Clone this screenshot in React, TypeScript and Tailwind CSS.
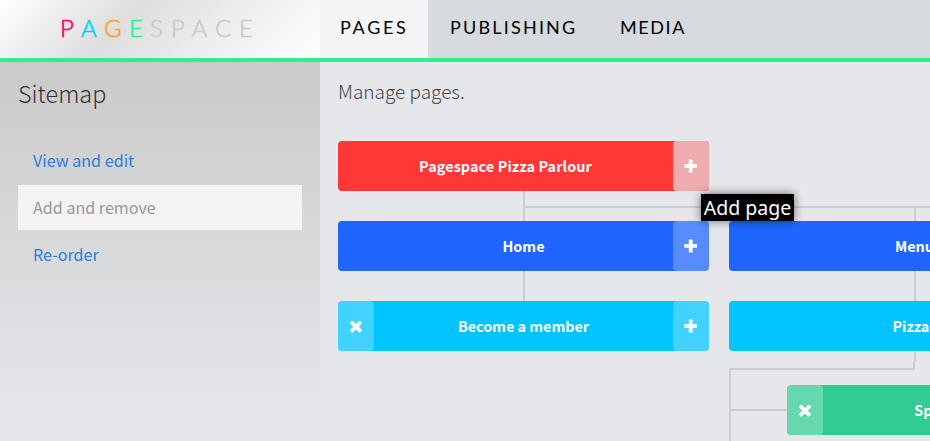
import type { ReactNode } from "react";

const sans = "font-['Noto_Sans_CJK_SC',sans-serif]";

function Plus() {
  return (
    <svg width="14" height="14" viewBox="0 0 14 14" fill="#fff">
      <path d="M4.8.5h3.8v4.5H13v3.8H8.6v4.7H4.8V8.8H.3V5h4.5z" />
    </svg>
  );
}

function Times() {
  return (
    <svg width="18" height="18" viewBox="0 0 1792 1792" fill="#fff">
      <path d="M1490 1322q0 40-28 68l-136 136q-28 28-68 28t-68-28l-294-294-294 294q-28 28-68 28t-68-28l-136-136q-28-28-28-68t28-68l294-294-294-294q-28-28-28-68t28-68l136-136q28-28 68-28t68 28l294 294 294-294q28-28 68-28t68 28l136 136q28 28 28 68t-28 68l-294 294 294 294q28 28 28 68z" />
    </svg>
  );
}

function Action({ tint = "bg-white/25", children }: { tint?: string; children: ReactNode }) {
  return <button className={`flex h-[50px] w-9 shrink-0 items-center justify-center rounded ${tint}`}>{children}</button>;
}

function PageNode({ color, label, remove = false, root = false }: { color: string; label: string; remove?: boolean; root?: boolean }) {
  return (
    <div className={`flex h-[50px] w-[371px] shrink-0 items-center rounded ${color}`}>
      {!root && <div className="w-9 shrink-0">{remove && <Action><Times /></Action>}</div>}
      <div className={`grow text-center text-[14.35px] leading-[50px] font-bold text-white ${root ? "tracking-[0.12px]" : ""}`}>{label}</div>
      <Action tint={root ? "bg-[#eeacae]" : undefined}><Plus /></Action>
    </div>
  );
}

const nav = "flex h-[55px] items-center text-[18px] text-black";

export default function App() {
  return (
    <div className={`h-[441px] w-[930px] overflow-hidden bg-[#e5e7eb] ${sans}`}>
      <header className="flex h-[62px] border-b-4 border-[#2af190] bg-[#d7dadf] font-[Lato,sans-serif]">
        <div className="flex h-[58px] w-80 bg-[linear-gradient(135deg,#fff_0%,#dedede_38%,#fff_100%)] pl-[60px] text-[24px] leading-[56px] font-light text-[#cbcbcb] [-webkit-text-stroke:0.6px_currentColor]">
          <span className="w-[21px] text-[#ff0058]">P</span>
          <span className="w-[23px] text-[#00d2ff]">A</span>
          <span className="w-[25px] text-[#ffa02a]">G</span>
          <span className="w-[21px] text-[#2af190]">E</span>
          <span className="tracking-[8px]">SPACE</span>
        </div>
        <nav className="flex">
          <div className="h-[58px] w-[108px] bg-[#f5f5f5] pl-5">
            <a className={`${nav} tracking-[2.7px]`}>PAGES</a>
          </div>
          <a className={`${nav} w-[170px] pl-[22px] tracking-[2.2px]`}>PUBLISHING</a>
          <a className={`${nav} pl-[22px] tracking-[1.6px]`}>MEDIA</a>
        </nav>
      </header>
      <div className="flex h-[379px]">
        <aside className="w-80 shrink-0 bg-linear-to-b from-[#cacaca] to-[#e5e7eb] to-95% px-[18px]">
          <h1 className="pt-[13px] text-[23.45px] leading-9 font-light text-[#333]">Sitemap</h1>
          <ul className="mt-[27px] flex flex-col gap-[2px] text-[16.13px] text-[#2a80e0]">
            <li className="h-[45px] px-[15px] leading-[44px]">View and edit</li>
            <li className="h-[45px] bg-[#f3f3f3] px-[15px] leading-[44px] text-[#999]">Add and remove</li>
            <li className="h-[45px] px-[15px] leading-[44px]">Re-order</li>
          </ul>
        </aside>
        <main className="w-[610px] overflow-hidden pl-[18px]">
          <p className="h-[79px] pt-[14px] text-[19px] leading-[30px] font-light text-[#444]">Manage pages.</p>
          <div className="relative w-[371px]">
            <PageNode color="bg-[#ff3737]" label="Pagespace Pizza Parlour" root />
            <div className="absolute top-[53px] left-[363px] z-10 h-[27px] w-[93px] bg-black text-center font-['Noto_Sans',sans-serif] text-[19.5px] leading-[27px] whitespace-nowrap text-white shadow-[0_0_10px_rgba(0,0,0,0.55)]">Add page</div>
          </div>
          <div className="flex h-[30px]">
            <div className="w-[185px]" />
            <div className="w-0.5 bg-[#cccdd1]" />
            <div className="mt-[15px] h-[15px] w-[391px] shrink-0 border-t-2 border-r-2 border-[#cccdd1]" />
            <div className="mt-[15px] h-0.5 grow bg-[#cccdd1]" />
          </div>
          <div className="flex gap-5">
            <section className="w-[371px] shrink-0">
              <PageNode color="bg-[#1e66ff]" label="Home" />
              <div className="ml-[185px] h-[30px] w-0.5 bg-[#cccdd1]" />
              <PageNode color="bg-[#00c4ff]" label="Become a member" remove />
            </section>
            <section className="w-[371px] shrink-0">
              <PageNode color="bg-[#1e66ff]" label="Menu" />
              <div className="ml-[185px] h-[30px] w-0.5 bg-[#cccdd1]" />
              <PageNode color="bg-[#00c4ff]" label="Pizzas" />
              <div className="ml-[185px] h-[10px] w-0.5 bg-[#cccdd1]" />
              <div className="ml-[184px] h-[7px] w-0.5 bg-[#cccdd1]" />
              <div className="h-0.5 w-[186px] bg-[#cccdd1]" />
              <div className="flex border-l-2 border-[#cccdd1]">
                <div className="mt-[39px] h-0.5 w-14 shrink-0 bg-[#cccdd1]" />
                <div className="pt-[15px] pb-5">
                  <div className="flex h-[50px] w-[313px] rounded bg-[#32cb92] text-[14.35px] leading-[50px] font-bold text-white">
                    <Action><Times /></Action>
                    <span className="grow text-center">Specials</span>
                    <div className="w-9" />
                  </div>
                </div>
              </div>
            </section>
          </div>
        </main>
      </div>
    </div>
  );
}
